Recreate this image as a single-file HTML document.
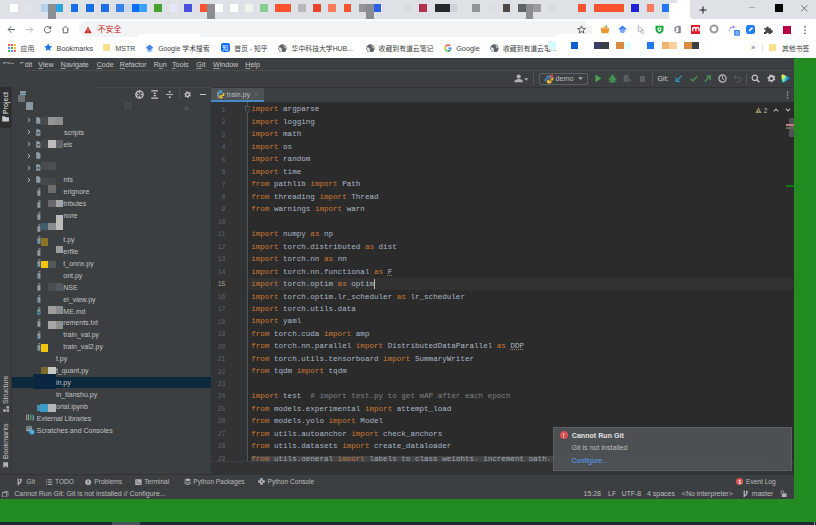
<!DOCTYPE html>
<html lang="zh"><head><meta charset="utf-8"><title>train.py</title>
<style>
html,body{margin:0;padding:0}
body{width:816px;height:525px;overflow:hidden;position:relative;background:#228b22;font-family:"Liberation Sans","Noto Sans CJK SC",sans-serif;-webkit-font-smoothing:antialiased}
.a,.q,.t,svg{position:absolute}
.t{white-space:nowrap;line-height:10px;height:10px}
.bm{font-size:7.3px;color:#3c4043;top:43.8px}
.cj{font-size:6.85px}
.mn{font-size:7.1px;color:#c6c6c6;top:60px}
.mn u{text-decoration:underline;text-decoration-color:rgba(198,198,198,0.65);text-decoration-thickness:0.5px;text-underline-offset:0.8px}
.tr{font-size:7px;color:#c2c2c2}
.tw{font-size:6.6px;color:#bbbbbb;top:476.7px}
.sb{font-size:7px;color:#bbbbbb;top:488.7px}
.code{font-family:"Liberation Mono",monospace;font-size:7.58px;color:#a9b7c6;left:251.2px;white-space:pre;line-height:12.47px;top:103.1px}
.code b{font-weight:normal;color:#cc7832}
.code i{font-style:normal;color:#808080}
.code u{text-decoration:underline dotted #8a8a5a;text-decoration-thickness:0.7px;text-underline-offset:1.2px}
.ln{font-family:"Liberation Mono",monospace;font-size:7.5px;color:#606366;transform:scaleX(0.86);transform-origin:100% 0;white-space:pre;line-height:12.47px;top:103.1px;left:205px;width:20.5px;text-align:right}
.vt{transform-origin:0 0;transform:rotate(-90deg);font-size:7.1px;color:#c4c4c4}
</style></head><body>

<div class="a" style="left:0;top:0;width:816px;height:19px;background:#dee1e6"></div>
<div class="a" style="left:669px;top:3px;width:21px;height:16px;background:#fff;border-radius:3px 3px 0 0"></div>
<div class="a" style="left:676.5px;top:0;width:13.5px;height:6px;background:#fff"></div>
<div class="a" style="left:690px;top:0;width:6px;height:19px;background:#fff"></div>
<div class="a" style="left:690px;top:0;width:126px;height:19px;background:#dee1e6;border-radius:0 0 0 3.5px"></div>
<div class="q" style="left:10.0px;top:4.0px;width:8.0px;height:7.5px;background:#ffffff"></div>
<div class="q" style="left:25.0px;top:4.0px;width:7.5px;height:7.5px;background:#e0e4ec"></div>
<div class="q" style="left:41.0px;top:4.0px;width:7.3px;height:7.5px;background:#b3d3ec"></div>
<div class="q" style="left:48.3px;top:4.0px;width:7.5px;height:14.7px;background:#8a8d91"></div>
<div class="q" style="left:55.8px;top:4.0px;width:7.5px;height:7.5px;background:#2ea5dd"></div>
<div class="q" style="left:70.8px;top:4.0px;width:7.5px;height:7.5px;background:#1a6fe8"></div>
<div class="q" style="left:85.8px;top:4.0px;width:7.8px;height:7.5px;background:#1a6fe8"></div>
<div class="q" style="left:100.8px;top:4.0px;width:7.8px;height:7.5px;background:#1a6fe8"></div>
<div class="q" style="left:116.0px;top:4.0px;width:7.6px;height:7.5px;background:#3b82e6"></div>
<div class="q" style="left:123.6px;top:4.0px;width:8.0px;height:7.5px;background:#c8d7ec"></div>
<div class="q" style="left:131.6px;top:4.0px;width:7.7px;height:7.5px;background:#0b6cf5"></div>
<div class="q" style="left:139.3px;top:4.0px;width:7.5px;height:7.5px;background:#3ba0f8"></div>
<div class="q" style="left:154.0px;top:4.0px;width:7.8px;height:7.5px;background:#45a02d"></div>
<div class="q" style="left:169.3px;top:4.0px;width:7.5px;height:7.5px;background:#e6e8fb"></div>
<div class="q" style="left:184.3px;top:4.0px;width:7.9px;height:7.5px;background:#4a4fdc"></div>
<div class="q" style="left:199.8px;top:4.0px;width:7.5px;height:7.5px;background:#fc5230"></div>
<div class="q" style="left:207.3px;top:4.0px;width:7.5px;height:14.7px;background:#8a8d91"></div>
<div class="q" style="left:214.8px;top:4.0px;width:7.9px;height:7.5px;background:#ffffff"></div>
<div class="q" style="left:230.2px;top:4.0px;width:7.5px;height:7.5px;background:#ffffff"></div>
<div class="q" style="left:245.2px;top:4.0px;width:7.5px;height:7.5px;background:#eaf5ec"></div>
<div class="q" style="left:260.2px;top:4.0px;width:7.8px;height:7.5px;background:#84cd8d"></div>
<div class="q" style="left:275.3px;top:4.0px;width:15.4px;height:7.5px;background:#fc5230"></div>
<div class="q" style="left:298.2px;top:4.0px;width:7.6px;height:7.5px;background:#b9babc"></div>
<div class="q" style="left:313.2px;top:4.0px;width:7.6px;height:7.5px;background:#e5452b"></div>
<div class="q" style="left:328.3px;top:4.0px;width:7.5px;height:7.5px;background:#fb7a5c"></div>
<div class="q" style="left:343.7px;top:4.0px;width:7.5px;height:7.5px;background:#fb5230"></div>
<div class="q" style="left:359.0px;top:4.0px;width:7.2px;height:7.5px;background:#929497"></div>
<div class="q" style="left:366.2px;top:4.0px;width:7.5px;height:14.7px;background:#8a8d91"></div>
<div class="q" style="left:373.7px;top:4.0px;width:7.8px;height:7.5px;background:#2b62e3"></div>
<div class="q" style="left:403.6px;top:4.0px;width:7.4px;height:7.5px;background:#d9dce2"></div>
<div class="q" style="left:419.2px;top:4.0px;width:7.6px;height:7.5px;background:#b5304e"></div>
<div class="q" style="left:434.7px;top:4.0px;width:15.0px;height:7.5px;background:#24292e"></div>
<div class="q" style="left:449.7px;top:4.0px;width:7.5px;height:7.5px;background:#cdd2dc"></div>
<div class="q" style="left:472.2px;top:4.0px;width:7.8px;height:7.5px;background:#929497"></div>
<div class="q" style="left:487.7px;top:4.0px;width:7.0px;height:7.5px;background:#dadde2"></div>
<div class="q" style="left:502.7px;top:4.0px;width:7.3px;height:7.5px;background:#4c4947"></div>
<div class="q" style="left:518.0px;top:4.0px;width:7.5px;height:7.5px;background:#5f6368"></div>
<div class="q" style="left:525.5px;top:4.0px;width:7.5px;height:14.7px;background:#8a8d91"></div>
<div class="q" style="left:533.0px;top:4.0px;width:7.5px;height:7.5px;background:#9a9c9f"></div>
<div class="q" style="left:547.0px;top:4.0px;width:8.0px;height:7.5px;background:#d9dce1"></div>
<div class="q" style="left:578.2px;top:4.0px;width:7.8px;height:7.5px;background:#fc5230"></div>
<div class="q" style="left:593.5px;top:4.0px;width:30.5px;height:7.5px;background:#fc5230"></div>
<div class="q" style="left:631.2px;top:4.0px;width:7.8px;height:7.5px;background:#1f22d0"></div>
<div class="q" style="left:646.5px;top:4.0px;width:7.5px;height:7.5px;background:#fb7a5c"></div>
<div class="q" style="left:661.8px;top:4.0px;width:7.2px;height:7.5px;background:#2176f2"></div>
<div class="q" style="left:775.0px;top:4.0px;width:8.0px;height:7.7px;background:#000000"></div>
<svg style="left:698px;top:4.5px" width="10" height="10" viewBox="0 0 10 10"><path d="M5 1.5V8.5M1.5 5H8.5" stroke="#202124" stroke-width="1.1" fill="none"/></svg>
<div class="a" style="left:749px;top:7.2px;width:6px;height:1px;background:#a8abaf"></div>
<svg style="left:799.5px;top:3.5px" width="9" height="9" viewBox="0 0 9 9"><path d="M1.3 1.3L7.3 7.3M7.3 1.3L1.3 7.3" stroke="#5f6368" stroke-width="0.9" fill="none"/></svg>
<div class="a" style="left:0;top:19px;width:816px;height:39px;background:#fff"></div>
<div class="a" style="left:78.8px;top:21.3px;width:513px;height:15.9px;background:#f1f3f4;border-radius:8px"></div>
<div class="q" style="left:139.0px;top:34.2px;width:60.7px;height:3.2px;background:#fff"></div>
<div class="q" style="left:555.8px;top:34.2px;width:40.0px;height:3.2px;background:#fff"></div>
<div class="q" style="left:586.0px;top:21.0px;width:8.0px;height:16.5px;background:#fff"></div>
<div class="q" style="left:586.0px;top:26.3px;width:5.7px;height:7.5px;background:#f1f3f4"></div>
<svg style="left:6.8px;top:24.8px" width="9" height="9" viewBox="0 0 9 9"><path d="M8 4.5H1.3M4.3 1.3L1.2 4.5L4.3 7.7" stroke="#5f6368" stroke-width="1" fill="none"/></svg>
<svg style="left:25.2px;top:24.8px" width="9" height="9" viewBox="0 0 9 9"><path d="M1 4.5H7.7M4.7 1.3L7.8 4.5L4.7 7.7" stroke="#bdc1c6" stroke-width="1" fill="none"/></svg>
<svg style="left:43.3px;top:24.8px" width="9" height="9" viewBox="0 0 9 9"><path d="M7.4 3.2A3.2 3.2 0 1 0 7.7 5.3" stroke="#5f6368" stroke-width="1" fill="none"/><path d="M8.2 0.8V3.8H5.2Z" fill="#5f6368"/></svg>
<svg style="left:61.3px;top:24.8px" width="9" height="9" viewBox="0 0 9 9"><path d="M1.2 4.3L4.5 1.3L7.8 4.3M2.2 3.8V7.8H6.8V3.8" stroke="#5f6368" stroke-width="1" fill="none"/></svg>
<svg style="left:84.3px;top:26px" width="8" height="8" viewBox="0 0 8 8"><path d="M4 0.6L7.6 7.2H0.4Z" fill="#c5221f"/><path d="M4 3V5.1M4 5.7V6.5" stroke="#fff" stroke-width="0.8"/></svg>
<div class="t" style="left:97.8px;top:24.6px;font-size:7.8px;color:#c5221f">不安全</div>
<svg style="left:577.3px;top:25.3px" width="9" height="9" viewBox="0 0 9 9"><path d="M4.5 0.9L5.6 3.4L8.3 3.6L6.2 5.4L6.9 8L4.5 6.6L2.1 8L2.8 5.4L0.7 3.6L3.4 3.4Z" stroke="#3c4043" stroke-width="0.8" fill="none"/></svg>
<svg style="left:600px;top:25px" width="10" height="9" viewBox="0 0 10 9"><path d="M0.5 3.2H9.5L8.3 8.2H1.7Z" fill="#e8962e"/><path d="M2 3L5 1.2L8 3Z" fill="#f0b04a"/><path d="M5.2 0.3L7.6 1.3L6 2.6Z" fill="#3aa335"/></svg>
<svg style="left:618.3px;top:25px" width="9" height="9" viewBox="0 0 9 9"><path d="M4.5 0.8L8.8 4.2H0.2Z" fill="#4285f4"/><circle cx="4.5" cy="5.6" r="2.6" fill="#7baaf7"/><path d="M4.5 0.8L8.8 4.2H0.2Z" fill="#4285f4"/></svg>
<svg style="left:637px;top:25px" width="9" height="10" viewBox="0 0 9 10"><path d="M1.2 0.8L1.2 7L3 5.4L4.3 8.2L5.3 7.7L4 5L6.3 4.9Z" stroke="#9aa0a6" stroke-width="0.7" fill="#fff"/><circle cx="6" cy="7" r="1.6" stroke="#bdc1c6" stroke-width="0.6" fill="none"/></svg>
<svg style="left:654.5px;top:25px" width="9" height="9" viewBox="0 0 9 9"><path d="M0.5 0.8H8.5V4.5C8.5 6.8 6.5 8.2 4.5 8.8C2.5 8.2 0.5 6.8 0.5 4.5Z" fill="#1aa63a"/><path d="M2.6 2.6H6.4V4.4C6.4 5.6 5.5 6.3 4.5 6.7C3.5 6.3 2.6 5.6 2.6 4.4Z" fill="#fff"/><path d="M3.6 3.4H5.4V4.6L4.5 5.3L3.6 4.6Z" fill="#1aa63a"/></svg>
<svg style="left:672.5px;top:25px" width="9" height="9" viewBox="0 0 9 9"><path d="M1.5 2.3L5.6 0.6L7.8 1.3V7.8L5.6 8.5L1.5 6.9L5.4 7.3V1.9L3.2 2.5V6.1L1.5 6.9Z" fill="#80868b"/></svg>
<div class="q" style="left:690.7px;top:25.1px;width:9.7px;height:8.6px;background:#e0192b"></div>
<svg style="left:690.7px;top:25.1px" width="9.7" height="8.6" viewBox="0 0 9.7 8.6"><path d="M1.7 6.3V3.7Q1.7 2.5 3.25 2.5Q4.85 2.5 4.85 3.9V6.3M4.85 3.9Q4.85 2.5 6.45 2.5Q8 2.5 8 3.7V6.3" stroke="#fff" stroke-width="1.3" fill="none"/></svg>
<svg style="left:708.5px;top:24.2px" width="10" height="10" viewBox="0 0 10 10"><circle cx="5" cy="5" r="3.5" stroke="#9e9e9e" stroke-width="2.1" fill="none"/></svg>
<svg style="left:727.5px;top:24.5px" width="13" height="12" viewBox="0 0 13 12"><path d="M2 4.2A2.2 2.2 0 0 1 4.2 2H6.5M5.3 0.8L6.7 2L5.3 3.2" stroke="#7a5bd6" stroke-width="0.9" fill="none"/><path d="M1.3 5.2V6.2" stroke="#4a8cf0" stroke-width="0.9"/><rect x="6.2" y="5" width="5.6" height="5.8" rx="0.8" fill="#2b7ff2"/><path d="M8.2 6.5H9.2A1.2 1.4 0 0 1 9.2 9.3H8.2Z" stroke="#fff" stroke-width="0.6" fill="none"/></svg>
<div class="a" style="left:745.6px;top:25px;width:9.2px;height:9px;background:#1f80f5;border-radius:2.3px"></div>
<svg style="left:745.6px;top:25px" width="9.2" height="9" viewBox="0 0 9.2 9"><path d="M2.6 6.6L3 4.9L5.9 2L7.1 3.2L4.2 6.1Z" fill="#fff"/></svg>
<svg style="left:763.2px;top:24.8px" width="10" height="10" viewBox="0 0 10 10"><path d="M1 3.2H3.3A1.3 1.3 0 1 1 5.7 3.2H8V5.3A1.3 1.3 0 1 1 8 7.7V9H5.8A1.2 1.2 0 1 0 3.4 9H1V6.9A1.25 1.25 0 1 0 1 4.5Z" fill="#454749"/></svg>
<div class="q" style="left:782.6px;top:26.1px;width:8.2px;height:7.8px;background:#b80045"></div>
<svg style="left:802.5px;top:24.5px" width="4" height="10" viewBox="0 0 4 10"><circle cx="2" cy="1.7" r="0.85" fill="#5f6368"/><circle cx="2" cy="5" r="0.85" fill="#5f6368"/><circle cx="2" cy="8.3" r="0.85" fill="#5f6368"/></svg>
<svg style="left:7.5px;top:43.6px" width="8" height="8" viewBox="0 0 8 8"><rect x="0.1" y="0.1" width="1.9" height="1.9" fill="#ea4335"/><rect x="3.0" y="0.1" width="1.9" height="1.9" fill="#ea4335"/><rect x="5.9" y="0.1" width="1.9" height="1.9" fill="#fbbc04"/><rect x="0.1" y="3.0" width="1.9" height="1.9" fill="#4285f4"/><rect x="3.0" y="3.0" width="1.9" height="1.9" fill="#34a853"/><rect x="5.9" y="3.0" width="1.9" height="1.9" fill="#fbbc04"/><rect x="0.1" y="5.9" width="1.9" height="1.9" fill="#34a853"/><rect x="3.0" y="5.9" width="1.9" height="1.9" fill="#4285f4"/><rect x="5.9" y="5.9" width="1.9" height="1.9" fill="#ea4335"/></svg>
<div class="t bm cj" style="left:20.6px">应用</div>
<svg style="left:43.8px;top:43.3px" width="8.4" height="8.4" viewBox="0 0 9 9"><path d="M4.5 0.4L5.8 3.2L8.8 3.5L6.5 5.5L7.2 8.5L4.5 6.9L1.8 8.5L2.5 5.5L0.2 3.5L3.2 3.2Z" fill="#1a73e8"/></svg>
<div class="t bm" style="left:56.6px">Bookmarks</div>
<div class="a" style="left:103.3px;top:43.8px;width:6.8px;height:7.6px;background:#fbe08c;border-radius:1px"></div>
<div class="t bm" style="left:115.6px;font-size:6.9px;top:44px">MSTR</div>
<svg style="left:144.6px;top:43.6px" width="9.2" height="8.8" viewBox="0 0 9 9"><circle cx="4.5" cy="5.8" r="2.7" fill="#a0c3ff"/><path d="M4.5 0.6L8.9 4.3H0.1Z" fill="#4285f4"/><path d="M2.2 4.3H6.8L4.5 6.6Z" fill="#356ac3"/></svg>
<div class="t bm cj" style="left:158.2px">Google 学术搜索</div>
<div class="a" style="left:220.7px;top:43px;width:9.4px;height:9.2px;background:#0a6cff;border-radius:2.2px"></div>
<div class="t" style="left:222.3px;top:42.7px;font-size:6.2px;color:#fff">知</div>
<div class="t bm cj" style="left:234.2px">首页 - 知乎</div>
<svg style="left:278.2px;top:43.6px" width="8.9" height="8.9" viewBox="0 0 9 9"><circle cx="4.5" cy="4.5" r="4.2" fill="#5f6368"/><path d="M1.2 3.2C2.4 3 3 3.8 3.8 4.6C4.2 5.3 3.4 6 3.9 7.2L4.2 8.3C2.4 8 1 6.6 0.9 4.6Z M5.2 1C5.4 2 6.4 2.2 6.6 3.2C6.2 4 7 4.6 7.9 4.4C7.9 3 7 1.4 5.2 1Z" fill="#fff" opacity="0.85"/></svg>
<div class="t bm cj" style="left:291.6px">华中科技大学HUB...</div>
<svg style="left:365.9px;top:43.6px" width="8.9" height="8.9" viewBox="0 0 9 9"><circle cx="4.5" cy="4.5" r="4.2" fill="#5f6368"/><path d="M1.2 3.2C2.4 3 3 3.8 3.8 4.6C4.2 5.3 3.4 6 3.9 7.2L4.2 8.3C2.4 8 1 6.6 0.9 4.6Z M5.2 1C5.4 2 6.4 2.2 6.6 3.2C6.2 4 7 4.6 7.9 4.4C7.9 3 7 1.4 5.2 1Z" fill="#fff" opacity="0.85"/></svg>
<div class="t bm cj" style="left:378.6px">收藏到有道云笔记</div>
<svg style="left:443.5px;top:43.6px" width="8" height="8" viewBox="0 0 8 8"><path d="M7.6 3.4H4.1V4.8H6.1A2.3 2.3 0 0 1 4.1 6.4V7.8A3.8 3.8 0 0 0 7.6 3.4Z" fill="#4285f4"/><path d="M4.1 0.2A3.8 3.8 0 0 0 0.8 2.2L2 3.1A2.4 2.4 0 0 1 4.1 1.6C4.8 1.6 5.3 1.9 5.7 2.2L6.7 1.2A3.8 3.8 0 0 0 4.1 0.2Z" fill="#ea4335"/><path d="M0.8 2.2A3.8 3.8 0 0 0 0.8 5.8L2 4.9A2.4 2.4 0 0 1 2 3.1Z" fill="#fbbc04"/><path d="M0.8 5.8A3.8 3.8 0 0 0 4.1 7.8A3.7 3.7 0 0 0 6.6 6.9L5.4 6A2.4 2.4 0 0 1 2 4.9Z" fill="#34a853"/></svg>
<div class="t bm" style="left:456.2px">Google</div>
<svg style="left:489.8px;top:43.6px" width="8.9" height="8.9" viewBox="0 0 9 9"><circle cx="4.5" cy="4.5" r="4.2" fill="#5f6368"/><path d="M1.2 3.2C2.4 3 3 3.8 3.8 4.6C4.2 5.3 3.4 6 3.9 7.2L4.2 8.3C2.4 8 1 6.6 0.9 4.6Z M5.2 1C5.4 2 6.4 2.2 6.6 3.2C6.2 4 7 4.6 7.9 4.4C7.9 3 7 1.4 5.2 1Z" fill="#fff" opacity="0.85"/></svg>
<div class="t bm cj" style="left:502.9px">收藏到有道云笔...</div>
<div class="q" style="left:548.3px;top:41.3px;width:7.5px;height:8.2px;background:#d5fbff"></div>
<div class="q" style="left:570.8px;top:41.5px;width:7.5px;height:7.5px;background:#0f5fd0"></div>
<div class="q" style="left:593.7px;top:41.5px;width:7.5px;height:7.5px;background:#3b3d6b"></div>
<div class="q" style="left:601.2px;top:41.5px;width:7.6px;height:7.5px;background:#3a3f44"></div>
<div class="q" style="left:616.2px;top:41.5px;width:7.6px;height:7.5px;background:#d98c3f"></div>
<div class="q" style="left:623.8px;top:41.5px;width:7.5px;height:7.5px;background:#e3fdfd"></div>
<div class="q" style="left:646.7px;top:41.5px;width:7.4px;height:7.5px;background:#1f78f0"></div>
<div class="q" style="left:661.8px;top:41.5px;width:7.5px;height:7.5px;background:#f0b473"></div>
<div class="q" style="left:669.3px;top:41.5px;width:7.6px;height:7.5px;background:#fbd09c"></div>
<div class="q" style="left:684.2px;top:41.5px;width:7.6px;height:7.5px;background:#d98c3f"></div>
<div class="q" style="left:691.8px;top:41.5px;width:7.6px;height:7.5px;background:#3a3f44"></div>
<div class="t" style="left:751px;top:42.6px;font-size:7.5px;color:#5f6368">»</div>
<div class="a" style="left:762.3px;top:42.5px;width:0.6px;height:10px;background:#e4e6e8"></div>
<div class="a" style="left:769px;top:43.8px;width:7px;height:7.6px;background:#fbe08c;border-radius:1px"></div>
<div class="t bm cj" style="left:782px">其他书签</div>
<div class="a" style="left:0;top:58px;width:794px;height:441px;background:#3c3f41"></div>
<div class="t mn" style="left:3px"><u>F</u>ile</div>
<div class="t mn" style="left:20px"><u>E</u>dit</div>
<div class="t mn" style="left:38.3px"><u>V</u>iew</div>
<div class="t mn" style="left:60.8px"><u>N</u>avigate</div>
<div class="t mn" style="left:96.7px"><u>C</u>ode</div>
<div class="t mn" style="left:119.8px"><u>R</u>efactor</div>
<div class="t mn" style="left:153.7px">R<u>u</u>n</div>
<div class="t mn" style="left:172px"><u>T</u>ools</div>
<div class="t mn" style="left:196.3px"><u>G</u>it</div>
<div class="t mn" style="left:213px"><u>W</u>indow</div>
<div class="t mn" style="left:245.3px"><u>H</u>elp</div>
<div class="q" style="left:0.0px;top:63.7px;width:25.2px;height:7.6px;background:#3c3f41"></div>
<div class="a" style="left:25px;top:70.2px;width:769px;height:0.7px;background:#4b4e50"></div>
<div class="a" style="left:210.6px;top:86.5px;width:583.4px;height:0.9px;background:#323232"></div><svg style="left:513.6px;top:74.2px" width="9.4" height="9" viewBox="0 0 9.4 9"><circle cx="4.7" cy="2.6" r="2.1" fill="#afb1b3"/><path d="M0.4 8.2C0.4 5.8 2.3 5 4.7 5C7.1 5 9 5.8 9 8.2Z" fill="#afb1b3"/></svg>
<svg style="left:523.8px;top:77.6px" width="4.4" height="3" viewBox="0 0 4.4 3"><path d="M0.2 0.3H4.2L2.2 2.7Z" fill="#afb1b3"/></svg>
<div class="a" style="left:533px;top:73px;width:0.7px;height:11.5px;background:#555759"></div>
<div class="a" style="left:538.6px;top:72.6px;width:47.4px;height:10.6px;border:0.8px solid #5e6162;border-radius:2px"></div>
<svg style="left:543.8px;top:73.6px" width="10" height="10" viewBox="0 0 10 10"><path d="M4.2 1.2C2.7 1.2 2.3 1.8 2.3 2.7V3.7H4.6V4.2H1.5C0.6 4.2 0.3 5 0.3 6C0.3 7 0.7 7.7 1.5 7.7H2.3V6.5C2.3 5.6 3 5 3.8 5H5.7C6.4 5 6.9 4.4 6.9 3.8V2.7C6.9 1.8 6.2 1.2 5.4 1.2Z" fill="#3d7dab"/><path d="M5.6 9.6C7.1 9.6 7.5 9 7.5 8.1V7.1H5.2V6.6H8.3C9.2 6.6 9.5 5.8 9.5 4.8C9.5 3.8 9.1 3.1 8.3 3.1H7.5V4.3C7.5 5.2 6.8 5.8 6 5.8H4.1C3.4 5.8 2.9 6.4 2.9 7V8.1C2.9 9 3.6 9.6 4.4 9.6Z" fill="#e8b830"/><path d="M6 0.6L9.2 3.8M9.2 0.6L6 3.8" stroke="#e0525a" stroke-width="1.1"/></svg>
<div class="t" style="left:555.4px;top:73.9px;font-size:7.3px;color:#bbbbbb">demo</div>
<svg style="left:577.6px;top:77.4px" width="5" height="3.4" viewBox="0 0 5 3.4"><path d="M0.2 0.3H4.8L2.5 3.1Z" fill="#afb1b3"/></svg>
<svg style="left:595.3px;top:74.4px" width="7" height="8.6" viewBox="0 0 7 8.6"><path d="M0.4 0.4L6.5 4.3L0.4 8.2Z" fill="#499c54"/></svg>
<svg style="left:608.2px;top:74px" width="9" height="9.4" viewBox="0 0 9 9.4"><ellipse cx="4.5" cy="5.6" rx="2.6" ry="3.3" fill="#499c54"/><path d="M2.9 2.6A1.6 1.6 0 0 1 6.1 2.6Z" fill="#499c54"/><path d="M0.6 3.4L2.2 4.4M8.4 3.4L6.8 4.4M0.3 5.8H2M8.7 5.8H7M0.7 8.4L2.2 7.3M8.3 8.4L6.8 7.3M2.8 0.6L3.6 1.6M6.2 0.6L5.4 1.6" stroke="#499c54" stroke-width="0.8"/><path d="M3.4 4.8H5.6M3.4 6.6H5.6" stroke="#3c3f41" stroke-width="0.6"/></svg>
<svg style="left:623px;top:74.2px" width="9.4" height="9.2" viewBox="0 0 9.4 9.2"><path d="M0.8 0.8H5.8V8H0.8Z" fill="#5d6062"/><path d="M4.6 3.6L9 6.2L4.6 8.8Z" fill="#5d6062" stroke="#3c3f41" stroke-width="0.5"/></svg>
<div class="q" style="left:639.7px;top:75.8px;width:5.8px;height:5.8px;background:#5d6062"></div>
<div class="a" style="left:651.8px;top:73px;width:0.7px;height:11.5px;background:#555759"></div>
<div class="t" style="left:657.6px;top:73.9px;font-size:7.1px;color:#cfcfcf">Git:</div>
<svg style="left:675.1px;top:75px" width="7.4" height="7.4" viewBox="0 0 8.4 8.4"><path d="M7.6 0.8L1.6 6.8M1.2 2.8V7.2H5.6" stroke="#3592c4" stroke-width="1.3" fill="none"/></svg>
<svg style="left:689.5px;top:75.2px" width="8" height="7.1" viewBox="0 0 9 8"><path d="M0.8 4.2L3.3 6.7L8.3 1.1" stroke="#499c54" stroke-width="1.3" fill="none"/></svg>
<svg style="left:704.1px;top:75px" width="7.4" height="7.4" viewBox="0 0 8.4 8.4"><path d="M0.8 7.6L6.8 1.6M2.8 1.2H7.2V5.6" stroke="#499c54" stroke-width="1.3" fill="none"/></svg>
<svg style="left:718px;top:74.2px" width="9" height="9" viewBox="0 0 9 9"><circle cx="4.5" cy="4.5" r="3.6" stroke="#bcbec0" stroke-width="1.2" fill="none"/><path d="M4.5 2.2V4.7L6.2 5.6" stroke="#bcbec0" stroke-width="1" fill="none"/></svg>
<svg style="left:733.2px;top:74.4px" width="9" height="9" viewBox="0 0 9 9"><path d="M1.2 3.2H5.6A2.4 2.4 0 0 1 5.6 8H3.4" stroke="#5d6062" stroke-width="1" fill="none"/><path d="M3 1.2L1 3.2L3 5.2" stroke="#5d6062" stroke-width="1" fill="none"/></svg>
<div class="a" style="left:746.4px;top:73px;width:0.7px;height:11.5px;background:#555759"></div>
<svg style="left:751.4px;top:74.2px" width="9" height="9" viewBox="0 0 9 9"><circle cx="3.8" cy="3.8" r="2.7" stroke="#c4c6c8" stroke-width="1.2" fill="none"/><path d="M5.8 5.8L8.3 8.3" stroke="#c4c6c8" stroke-width="1.4"/></svg>
<svg style="left:766.6px;top:74.2px" width="9" height="9" viewBox="0 0 9 9"><path d="M4.5 0.4L5.3 0.5L5.6 1.6L6.5 2.1L7.5 1.6L8.2 2.6L7.5 3.4V4.6L8.4 5.3L7.8 6.5L6.7 6.3L5.9 7L5.7 8.1L4.5 8.4L3.9 7.4L2.9 7.1L1.9 7.6L1 6.7L1.6 5.7L1.3 4.7L0.3 4.2L0.6 3L1.7 2.9L2.3 2L2.1 0.9L3.2 0.5L3.9 1.4Z" fill="#c4c6c8"/><circle cx="4.4" cy="4.4" r="1.5" fill="#3c3f41"/></svg>
<svg style="left:781.1px;top:74.3px" width="9" height="8.8" viewBox="0 0 9.4 9.2"><defs><linearGradient id="cw" x1="0" y1="0.2" x2="1" y2="0.55"><stop offset="0" stop-color="#f6f24a"/><stop offset="0.28" stop-color="#d4ec5c"/><stop offset="0.5" stop-color="#6fd6a6"/><stop offset="0.68" stop-color="#1f8fe0"/><stop offset="1" stop-color="#1d6fd8"/></linearGradient><linearGradient id="cw2" x1="0.1" y1="1" x2="0.35" y2="0.45"><stop offset="0" stop-color="#22c8dc"/><stop offset="1" stop-color="#22c8dc" stop-opacity="0"/></linearGradient></defs><path d="M2.4 0.6C1.2 0.2 0.4 0.9 0.5 2.1L1 7.2C1.1 8.5 2.1 9 3.1 8.4L8.3 5.6C9.2 5 9.2 4 8.3 3.5Z" fill="url(#cw)"/><path d="M2.4 0.6C1.2 0.2 0.4 0.9 0.5 2.1L1 7.2C1.1 8.5 2.1 9 3.1 8.4L8.3 5.6C9.2 5 9.2 4 8.3 3.5Z" fill="url(#cw2)"/></svg>
<div class="a" style="left:0;top:87.3px;width:11.8px;height:40.7px;background:#2d2f30"></div>
<div class="a" style="left:11.3px;top:87.3px;width:0.7px;height:387px;background:#323436"></div>
<div class="t vt" style="left:0.6px;top:113.6px;color:#e8e8e8">Project</div>
<svg style="left:2.2px;top:116.4px" width="7.2" height="5.8" viewBox="0 0 7.2 5.8"><path d="M0.2 0.2H2.8L3.6 1.2H7V5.6H0.2Z" fill="#c9cbcd"/></svg>
<div class="t vt" style="left:0.6px;top:403.6px">Structure</div>
<svg style="left:2.6px;top:405.8px" width="6.4" height="6" viewBox="0 0 6.4 6"><rect x="3.4" y="0.2" width="2.6" height="2.4" fill="#afb1b3"/><rect x="0.2" y="3.4" width="2.6" height="2.4" fill="#afb1b3"/><rect x="3.6" y="3.4" width="2.6" height="2.4" fill="#afb1b3"/></svg>
<div class="t vt" style="left:0.6px;top:458.8px">Bookmarks</div>
<svg style="left:2.9px;top:461.8px" width="5.4" height="6" viewBox="0 0 5.4 6"><path d="M0.2 0.2H5.2V5.8L2.7 4.2L0.2 5.8Z" fill="#afb1b3"/></svg>
<div class="a" style="left:94px;top:86.6px;width:117px;height:0.7px;background:#45484a"></div>
<div class="q" style="left:19.5px;top:91.1px;width:6.0px;height:3.8px;background:#8d979d"></div>
<div class="q" style="left:19.5px;top:93.1px;width:6.0px;height:1.3px;background:#3d8fb5"></div>
<div class="q" style="left:18.0px;top:94.8px;width:7.3px;height:7.3px;background:#6b7275"></div>
<div class="q" style="left:25.7px;top:102.3px;width:7.5px;height:7.4px;background:#8796a1"></div>
<div class="q" style="left:124.2px;top:102.2px;width:7.4px;height:7.6px;background:#444749"></div>
<div class="t" style="left:184.6px;top:102.6px;font-size:5.6px;color:#6a6d6f">lo</div>
<svg style="left:135.4px;top:89.9px" width="9" height="9" viewBox="0 0 9 9"><circle cx="4.5" cy="4.5" r="3.65" stroke="#c4c6c8" stroke-width="1.3" fill="none"/><path d="M4.5 4L3.3 1.6H5.7ZM4.5 5L3.3 7.4H5.7ZM4 4.5L1.6 3.3V5.7ZM5 4.5L7.4 3.3V5.7Z" fill="#c4c6c8"/></svg>
<svg style="left:150.6px;top:90px" width="7.6" height="9" viewBox="0 0 7.6 9"><path d="M0.2 0.8H7.4M0.2 8.2H7.4" stroke="#c4c6c8" stroke-width="1.3"/><path d="M3.8 2.2L5.4 4H2.2ZM3.8 6.8L5.4 5H2.2Z" fill="#c4c6c8"/></svg>
<svg style="left:165.8px;top:90px" width="7.6" height="9" viewBox="0 0 7.6 9"><path d="M0.2 4.5H7.4" stroke="#c4c6c8" stroke-width="0.9"/><path d="M3.8 3.2L5.3 1.2H2.3ZM3.8 5.8L5.3 7.8H2.3Z" fill="#c4c6c8"/></svg>
<div class="a" style="left:178.7px;top:89px;width:0.7px;height:11px;background:#4b4e50"></div>
<svg style="left:184.4px;top:91.1px" width="7.4" height="7.4" viewBox="0 0 9 9"><path d="M4.5 0.4L5.3 0.5L5.6 1.6L6.5 2.1L7.5 1.6L8.2 2.6L7.5 3.4V4.6L8.4 5.3L7.8 6.5L6.7 6.3L5.9 7L5.7 8.1L4.5 8.4L3.9 7.4L2.9 7.1L1.9 7.6L1 6.7L1.6 5.7L1.3 4.7L0.3 4.2L0.6 3L1.7 2.9L2.3 2L2.1 0.9L3.2 0.5L3.9 1.4Z" fill="#c4c6c8"/><circle cx="4.4" cy="4.4" r="1.5" fill="#3c3f41"/></svg>
<div class="a" style="left:199.8px;top:94px;width:6.6px;height:1px;background:#c4c6c8"></div>
<svg style="left:26.9px;top:117.4px" width="4" height="6" viewBox="0 0 4 6"><path d="M0.7 0.9L3 3L0.7 5.1" stroke="#afb1b3" stroke-width="1" fill="none"/></svg>
<svg style="left:36.2px;top:116.7px" width="4.6" height="7" viewBox="0 0 4.6 7"><path d="M0.2 0.3H2.6L4.4 1.4V6.8H0.2Z" fill="#8a9ba8"/></svg>
<svg style="left:26.9px;top:129.3px" width="4" height="6" viewBox="0 0 4 6"><path d="M0.7 0.9L3 3L0.7 5.1" stroke="#afb1b3" stroke-width="1" fill="none"/></svg>
<svg style="left:36.2px;top:128.6px" width="4.6" height="7" viewBox="0 0 4.6 7"><path d="M0.2 0.3H2.6L4.4 1.4V6.8H0.2Z" fill="#8a9ba8"/><rect x="1.6" y="3" width="1.8" height="1.8" fill="#3c3f41"/></svg>
<svg style="left:26.9px;top:141.2px" width="4" height="6" viewBox="0 0 4 6"><path d="M0.7 0.9L3 3L0.7 5.1" stroke="#afb1b3" stroke-width="1" fill="none"/></svg>
<svg style="left:36.2px;top:140.5px" width="4.6" height="7" viewBox="0 0 4.6 7"><path d="M0.2 0.3H2.6L4.4 1.4V6.8H0.2Z" fill="#8a9ba8"/><rect x="1.6" y="3" width="1.8" height="1.8" fill="#3c3f41"/></svg>
<svg style="left:26.9px;top:153.1px" width="4" height="6" viewBox="0 0 4 6"><path d="M0.7 0.9L3 3L0.7 5.1" stroke="#afb1b3" stroke-width="1" fill="none"/></svg>
<svg style="left:36.2px;top:152.4px" width="4.6" height="7" viewBox="0 0 4.6 7"><path d="M0.2 0.3H2.6L4.4 1.4V6.8H0.2Z" fill="#8a9ba8"/></svg>
<svg style="left:26.9px;top:165.0px" width="4" height="6" viewBox="0 0 4 6"><path d="M0.7 0.9L3 3L0.7 5.1" stroke="#afb1b3" stroke-width="1" fill="none"/></svg>
<svg style="left:36.2px;top:164.3px" width="4.6" height="7" viewBox="0 0 4.6 7"><path d="M0.2 0.3H2.6L4.4 1.4V6.8H0.2Z" fill="#8a9ba8"/><rect x="1.6" y="3" width="1.8" height="1.8" fill="#3c3f41"/></svg>
<svg style="left:26.9px;top:176.9px" width="4" height="6" viewBox="0 0 4 6"><path d="M0.7 0.9L3 3L0.7 5.1" stroke="#afb1b3" stroke-width="1" fill="none"/></svg>
<svg style="left:36.2px;top:176.2px" width="4.6" height="7" viewBox="0 0 4.6 7"><path d="M0.2 0.3H2.6L4.4 1.4V6.8H0.2Z" fill="#8a9ba8"/></svg>
<svg style="left:37.2px;top:188.0px" width="3.6" height="8" viewBox="0 0 3.6 8"><path d="M1.4 0.2H3.4V1.4H1.4Z M0.4 2.2H3.4V7.8H0.4Z" fill="#919da5"/></svg>
<svg style="left:37.2px;top:199.9px" width="3.6" height="8" viewBox="0 0 3.6 8"><path d="M1.4 0.2H3.4V1.4H1.4Z M0.4 2.2H3.4V7.8H0.4Z" fill="#919da5"/></svg>
<svg style="left:37.2px;top:211.8px" width="3.6" height="8" viewBox="0 0 3.6 8"><path d="M1.4 0.2H3.4V1.4H1.4Z M0.4 2.2H3.4V7.8H0.4Z" fill="#919da5"/></svg>
<svg style="left:37.2px;top:223.7px" width="3.6" height="8" viewBox="0 0 3.6 8"><path d="M1.4 0.2H3.4V1.4H1.4Z M0.4 2.2H3.4V7.8H0.4Z" fill="#919da5"/></svg>
<svg style="left:37.2px;top:235.6px" width="3.6" height="8" viewBox="0 0 3.6 8"><path d="M1.4 0.2H3.4V1.4H1.4Z M0.4 2.2H3.4V7.8H0.4Z" fill="#919da5"/><rect x="0.3" y="4.8" width="1.5" height="2.4" fill="#3a86b0"/></svg>
<svg style="left:37.2px;top:247.5px" width="3.6" height="8" viewBox="0 0 3.6 8"><path d="M1.4 0.2H3.4V1.4H1.4Z M0.4 2.2H3.4V7.8H0.4Z" fill="#919da5"/></svg>
<svg style="left:37.2px;top:259.4px" width="3.6" height="8" viewBox="0 0 3.6 8"><path d="M1.4 0.2H3.4V1.4H1.4Z M0.4 2.2H3.4V7.8H0.4Z" fill="#919da5"/><rect x="0.3" y="4.8" width="1.5" height="2.4" fill="#3a86b0"/></svg>
<svg style="left:37.2px;top:271.3px" width="3.6" height="8" viewBox="0 0 3.6 8"><path d="M1.4 0.2H3.4V1.4H1.4Z M0.4 2.2H3.4V7.8H0.4Z" fill="#919da5"/><rect x="0.3" y="4.8" width="1.5" height="2.4" fill="#3a86b0"/></svg>
<svg style="left:37.2px;top:283.2px" width="3.6" height="8" viewBox="0 0 3.6 8"><path d="M1.4 0.2H3.4V1.4H1.4Z M0.4 2.2H3.4V7.8H0.4Z" fill="#919da5"/></svg>
<svg style="left:37.2px;top:295.1px" width="3.6" height="8" viewBox="0 0 3.6 8"><path d="M1.4 0.2H3.4V1.4H1.4Z M0.4 2.2H3.4V7.8H0.4Z" fill="#919da5"/><rect x="0.3" y="4.8" width="1.5" height="2.4" fill="#3a86b0"/></svg>
<svg style="left:37.2px;top:307.1px" width="3.6" height="8" viewBox="0 0 3.6 8"><path d="M1.4 0.2H3.4V1.4H1.4Z M0.4 2.2H3.4V7.8H0.4Z" fill="#919da5"/><rect x="0" y="4.2" width="3.2" height="3.4" fill="#3a8fbd"/><rect x="0.9" y="5.1" width="1.6" height="1.6" fill="#4a4d4f"/></svg>
<svg style="left:37.2px;top:319.0px" width="3.6" height="8" viewBox="0 0 3.6 8"><path d="M1.4 0.2H3.4V1.4H1.4Z M0.4 2.2H3.4V7.8H0.4Z" fill="#919da5"/></svg>
<svg style="left:37.2px;top:330.9px" width="3.6" height="8" viewBox="0 0 3.6 8"><path d="M1.4 0.2H3.4V1.4H1.4Z M0.4 2.2H3.4V7.8H0.4Z" fill="#919da5"/><rect x="0.3" y="4.8" width="1.5" height="2.4" fill="#3a86b0"/></svg>
<svg style="left:37.2px;top:342.8px" width="3.6" height="8" viewBox="0 0 3.6 8"><path d="M1.4 0.2H3.4V1.4H1.4Z M0.4 2.2H3.4V7.8H0.4Z" fill="#919da5"/><rect x="0.3" y="4.8" width="1.5" height="2.4" fill="#3a86b0"/></svg>
<div class="t tr" style="left:63.9px;top:127.8px">scripts</div>
<div class="t tr" style="left:63.4px;top:139.7px">els</div>
<div class="t tr" style="left:63.6px;top:175.4px">nts</div>
<div class="t tr" style="left:63.6px;top:187.4px">erignore</div>
<div class="t tr" style="left:63.3px;top:199.3px">tributes</div>
<div class="t tr" style="left:63.4px;top:211.2px">nore</div>
<div class="t tr" style="left:63.3px;top:235.0px">t.py</div>
<div class="t tr" style="left:63.3px;top:246.9px">erfile</div>
<div class="t tr" style="left:63.3px;top:258.8px">t_onnx.py</div>
<div class="t tr" style="left:63.3px;top:270.7px">ont.py</div>
<div class="t tr" style="left:63.3px;top:282.6px">NSE</div>
<div class="t tr" style="left:63.3px;top:294.6px">el_view.py</div>
<div class="t tr" style="left:63.3px;top:306.5px">ME.md</div>
<div class="t tr" style="left:63.3px;top:318.4px">rements.txt</div>
<div class="t tr" style="left:63.3px;top:330.3px">train_val.py</div>
<div class="t tr" style="left:63.3px;top:342.2px">train_val2.py</div>
<div class="t tr" style="left:55.9px;top:354.1px">t.py</div>
<div class="t tr" style="left:55.9px;top:366.0px">t_quant.py</div>
<div class="q" style="left:11.9px;top:376.5px;width:198.7px;height:11.6px;background:#0d293e"></div>
<div class="q" style="left:33.2px;top:374.2px;width:22.7px;height:14.7px;background:#0b2640"></div>
<div class="t tr" style="left:55.9px;top:377.9px">in.py</div>
<div class="t tr" style="left:55.9px;top:389.8px">in_tianshu.py</div>
<div class="t tr" style="left:56px;top:401.7px">orial.ipynb</div>
<div class="t tr" style="left:36.8px;top:413.7px">External Libraries</div>
<div class="t tr" style="left:36.8px;top:425.6px">Scratches and Consoles</div>
<div class="q" style="left:40.6px;top:116.7px;width:7.0px;height:8.2px;background:#484b4d"></div>
<div class="q" style="left:47.6px;top:116.7px;width:7.8px;height:8.2px;background:#959595"></div>
<div class="q" style="left:55.4px;top:116.7px;width:7.8px;height:8.2px;background:#8d8d8d"></div>
<div class="q" style="left:40.6px;top:140.2px;width:7.0px;height:7.6px;background:#45484a"></div>
<div class="q" style="left:47.6px;top:140.2px;width:8.4px;height:7.6px;background:#bdbdbd"></div>
<div class="q" style="left:56.0px;top:140.2px;width:7.2px;height:7.6px;background:#626466"></div>
<div class="q" style="left:40.6px;top:162.2px;width:7.6px;height:7.5px;background:#484b4d"></div>
<div class="q" style="left:48.2px;top:162.2px;width:7.7px;height:7.5px;background:#4d5052"></div>
<div class="q" style="left:40.6px;top:177.5px;width:7.6px;height:7.2px;background:#47494b"></div>
<div class="q" style="left:48.2px;top:177.5px;width:7.7px;height:7.2px;background:#454849"></div>
<div class="q" style="left:48.0px;top:184.8px;width:7.9px;height:7.9px;background:#6a6c6e"></div>
<div class="q" style="left:48.0px;top:200.1px;width:7.9px;height:7.4px;background:#67696b"></div>
<div class="q" style="left:55.9px;top:200.1px;width:7.3px;height:7.4px;background:#a5a5a5"></div>
<div class="q" style="left:55.9px;top:215.4px;width:7.3px;height:14.9px;background:#bcbcbc"></div>
<div class="q" style="left:40.6px;top:222.9px;width:7.4px;height:7.4px;background:#3f5e6e"></div>
<div class="q" style="left:48.0px;top:222.9px;width:7.9px;height:7.4px;background:#8a8a8a"></div>
<div class="q" style="left:40.6px;top:238.0px;width:7.4px;height:7.6px;background:#8a7428"></div>
<div class="q" style="left:55.9px;top:245.9px;width:7.3px;height:7.0px;background:#9c9c9c"></div>
<div class="q" style="left:40.6px;top:260.8px;width:7.4px;height:7.4px;background:#f1c40f"></div>
<div class="q" style="left:48.0px;top:260.8px;width:7.9px;height:7.4px;background:#55585a"></div>
<div class="q" style="left:48.0px;top:283.1px;width:7.9px;height:7.5px;background:#4b4e50"></div>
<div class="q" style="left:55.9px;top:283.1px;width:7.3px;height:7.5px;background:#55585a"></div>
<div class="q" style="left:48.0px;top:305.9px;width:7.9px;height:7.7px;background:#9d9d9d"></div>
<div class="q" style="left:55.9px;top:305.9px;width:7.3px;height:7.7px;background:#8b8b8b"></div>
<div class="q" style="left:48.0px;top:321.2px;width:7.9px;height:7.7px;background:#a8a8a8"></div>
<div class="q" style="left:55.9px;top:321.2px;width:7.3px;height:7.7px;background:#909090"></div>
<div class="q" style="left:40.6px;top:344.0px;width:7.4px;height:7.5px;background:#f1c40f"></div>
<div class="q" style="left:40.6px;top:366.8px;width:7.4px;height:7.4px;background:#7a6a2e"></div>
<div class="q" style="left:48.0px;top:366.8px;width:7.9px;height:7.4px;background:#c8c8c8"></div>
<div class="q" style="left:36.9px;top:404.6px;width:3.2px;height:6.4px;background:#4a8fb0"></div>
<div class="q" style="left:40.0px;top:403.8px;width:8.0px;height:7.8px;background:#3b9cc4"></div>
<div class="q" style="left:48.0px;top:404.0px;width:8.0px;height:7.6px;background:#b5b5b5"></div>
<svg style="left:26px;top:414px" width="8.4" height="6.6" viewBox="0 0 8.4 6.6"><path d="M0.6 0.8V6.4M2.4 0.2V6.4" stroke="#afb1b3" stroke-width="0.9"/><path d="M4.2 0.8V6.4" stroke="#62b543" stroke-width="0.9"/><path d="M6 0.2V6.4" stroke="#3d9fd0" stroke-width="0.9"/><path d="M7.7 1.4V6.4" stroke="#afb1b3" stroke-width="0.9"/></svg>
<svg style="left:26px;top:425.6px" width="9" height="9" viewBox="0 0 9 9"><rect x="0.4" y="0.3" width="5.4" height="5" fill="#9aa7b0"/><path d="M1.2 1.6H5M1.2 3H3.4" stroke="#3c3f41" stroke-width="0.6"/><circle cx="5.9" cy="6" r="2.7" fill="#3d9fd0"/><path d="M5.9 4.6V6.2H7" stroke="#fff" stroke-width="0.5" fill="none"/></svg>
<div class="a" style="left:210.6px;top:461.3px;width:583.4px;height:13.1px;background:#313335"></div>
<div class="a" style="left:210.6px;top:461.1px;width:583.4px;height:0.7px;background:#3d4042"></div>
<div class="a" style="left:210.6px;top:102.4px;width:583.4px;height:358.9px;background:#2b2b2b"></div>
<div class="a" style="left:210.6px;top:102.4px;width:37px;height:358.9px;background:#313335"></div>
<div class="a" style="left:247.1px;top:102.4px;width:0.8px;height:358.9px;background:#555555"></div>
<div class="a" style="left:211px;top:87.5px;width:53px;height:14.9px;background:#4e5254"></div>
<div class="a" style="left:211px;top:100.3px;width:53px;height:2.1px;background:#4a88c7"></div>
<svg style="left:217.2px;top:90.4px" width="7.6" height="8.8" viewBox="0 0 7.6 8.8"><path d="M3.2 0.3C2.1 0.3 1.7 0.8 1.7 1.5V2.4H3.6V2.8H1C0.4 2.8 0.1 3.5 0.1 4.3C0.1 5.2 0.4 5.8 1 5.8H1.7V4.8C1.7 4 2.3 3.6 2.9 3.6H4.5C5 3.6 5.4 3.2 5.4 2.6V1.5C5.4 0.8 4.8 0.3 4.2 0.3Z" fill="#4f9ad0"/><path d="M4.4 8.5C5.5 8.5 5.9 8 5.9 7.3V6.4H4V6H6.6C7.2 6 7.5 5.3 7.5 4.5C7.5 3.6 7.2 3 6.6 3H5.9V4C5.9 4.8 5.3 5.2 4.7 5.2H3.1C2.6 5.2 2.2 5.6 2.2 6.2V7.3C2.2 8 2.8 8.5 3.4 8.5Z" fill="#f0c63a"/><path d="M0.3 1.5H1.7V8.6H0.3Z" fill="#9aa7b0" opacity="0.7"/></svg>
<div class="t" style="left:226.5px;top:90.2px;font-size:7.2px;color:#bbbbbb">train.py</div>
<svg style="left:254.4px;top:91.9px" width="5" height="5" viewBox="0 0 5 5"><path d="M0.5 0.5L4.5 4.5M4.5 0.5L0.5 4.5" stroke="#6e7072" stroke-width="0.7"/></svg>
<svg style="left:786.4px;top:90.6px" width="3" height="8" viewBox="0 0 3 8"><circle cx="1.5" cy="1.2" r="0.75" fill="#afb1b3"/><circle cx="1.5" cy="4" r="0.75" fill="#afb1b3"/><circle cx="1.5" cy="6.8" r="0.75" fill="#afb1b3"/></svg>
<div class="a" style="left:211px;top:277.5px;width:583px;height:12.4px;background:#323232"></div>
<div class="a" style="left:247.1px;top:277.5px;width:0.8px;height:12.4px;background:#555555"></div>
<svg style="left:755.1px;top:106.6px" width="7" height="6.5" viewBox="0 0 6.4 6"><path d="M3.2 0.2L6.2 5.8H0.2Z" fill="#a39467"/><path d="M3.2 2.2V3.8M3.2 4.4V5" stroke="#2b2b2b" stroke-width="0.7"/></svg>
<div class="t" style="left:763.7px;top:105.9px;font-size:6.4px;color:#bbbbbb">2</div>
<svg style="left:772.5px;top:107.8px" width="6" height="4" viewBox="0 0 6 4"><path d="M0.8 3.4L3 1.1L5.2 3.4" stroke="#afb1b3" stroke-width="1.1" fill="none"/></svg>
<svg style="left:784.6px;top:108.2px" width="6" height="4" viewBox="0 0 6 4"><path d="M0.8 0.6L3 2.9L5.2 0.6" stroke="#afb1b3" stroke-width="1.1" fill="none"/></svg>
<div class="q" style="left:789.0px;top:117.8px;width:5.0px;height:19.2px;background:#4f5152"></div>
<div class="q" style="left:786.3px;top:124.0px;width:7.7px;height:2.1px;background:#be7f89"></div>
<div class="q" style="left:786.3px;top:127.0px;width:7.7px;height:2.0px;background:#6b6654"></div>
<div class="q" style="left:786.3px;top:185.0px;width:7.7px;height:2.2px;background:#0a7d0a"></div>
<svg style="left:244.6px;top:105.6px" width="5.6" height="7" viewBox="0 0 5.6 7"><path d="M0.5 0.5H5.1V4.6L2.8 6.5L0.5 4.6Z" fill="#2b2b2b" stroke="#6b6e70" stroke-width="0.7"/><path d="M1.6 3H4" stroke="#6b6e70" stroke-width="0.7"/></svg>
<div class="a" style="left:211px;top:102.4px;width:583px;height:359px;overflow:hidden"><div class="a code" style="left:40.2px;top:1.1px"><b>import</b> argparse
<b>import</b> logging
<b>import</b> math
<b>import</b> os
<b>import</b> random
<b>import</b> time
<b>from</b> pathlib <b>import</b> Path
<b>from</b> threading <b>import</b> Thread
<b>from</b> warnings <b>import</b> warn

<b>import</b> numpy <b>as</b> np
<b>import</b> torch.distributed <b>as</b> dist
<b>import</b> torch.nn <b>as</b> nn
<b>import</b> torch.nn.functional <b>as</b> <u>F</u>
<b>import</b> torch.optim <b>as</b> optim
<b>import</b> torch.optim.lr_scheduler <b>as</b> lr_scheduler
<b>import</b> torch.utils.data
<b>import</b> yaml
<b>from</b> torch.cuda <b>import</b> amp
<b>from</b> torch.nn.parallel <b>import</b> DistributedDataParallel <b>as</b> <u>DDP</u>
<b>from</b> torch.utils.tensorboard <b>import</b> SummaryWriter
<b>from</b> tqdm <b>import</b> tqdm

<b>import</b> test  <i># import test.py to get mAP after each epoch</i>
<b>from</b> models.experimental <b>import</b> attempt_load
<b>from</b> models.yolo <b>import</b> Model
<b>from</b> utils.autoanchor <b>import</b> check_anchors
<b>from</b> utils.datasets <b>import</b> create_dataloader
<b>from</b> utils.general <b>import</b> labels_to_class_weights<b>,</b> increment_path<b>,</b></div>
<div class="a ln" style="left:-6px;top:1.3px">1
2
3
4
5
6
7
8
9
10
11
12
13
14
<span style="color:#a4a3a3">15</span>
16
17
18
19
20
21
22
23
24
25
26
27
28
29</div></div>
<div class="a" style="left:251.4px;top:456.1px;width:517px;height:5.2px;background:rgba(128,128,128,0.28)"></div>
<div class="a" style="left:374.2px;top:279px;width:0.8px;height:9.6px;background:#bbbbbb"></div>
<div class="a" style="left:0;top:474.4px;width:794px;height:0.7px;background:#323232"></div>
<div class="a" style="left:0;top:487.3px;width:794px;height:0.6px;background:#383b3d"></div>
<svg style="left:16.6px;top:478px" width="5" height="7.6" viewBox="0 0 5 7.6"><path d="M1.2 0.4V7.2M1.2 5.4C3.8 5.4 3.8 4.4 3.8 2.6" stroke="#b8babc" stroke-width="1.2" fill="none"/><circle cx="3.8" cy="1.8" r="1.1" fill="#b8babc"/></svg>
<div class="t tw" style="left:26.6px">Git</div>
<svg style="left:46.4px;top:478.8px" width="6.4" height="6" viewBox="0 0 6.4 6"><path d="M0.2 0.8H1.2M2 0.8H6.2M0.2 3.1H1.2M2 3.1H6.2M0.2 5.4H1.2M2 5.4H6.2" stroke="#afb1b3" stroke-width="1"/></svg>
<div class="t tw" style="left:55px">TODO</div>
<svg style="left:85.3px;top:478.6px" width="6.4" height="6.4" viewBox="0 0 6.4 6.4"><circle cx="3.2" cy="3.2" r="3" fill="#afb1b3"/><path d="M3.2 1.4V3.7M3.2 4.4V5.1" stroke="#3c3f41" stroke-width="0.8"/></svg>
<div class="t tw" style="left:94.3px">Problems</div>
<svg style="left:134.8px;top:478.6px" width="6.8" height="6.4" viewBox="0 0 6.8 6.4"><rect x="0.2" y="0.3" width="6.4" height="5.8" rx="0.6" fill="#afb1b3"/><path d="M1.4 1.8L2.8 3L1.4 4.2M3.4 4.4H5.2" stroke="#3c3f41" stroke-width="0.7" fill="none"/></svg>
<div class="t tw" style="left:144.3px">Terminal</div>
<svg style="left:183.6px;top:478.2px" width="7.6" height="7.2" viewBox="0 0 7.6 7.2"><path d="M3.8 0.2L7.4 1.9L3.8 3.6L0.2 1.9Z" fill="#afb1b3"/><path d="M0.4 3.6L3.8 5.2L7.2 3.6M0.4 5.2L3.8 6.8L7.2 5.2" stroke="#afb1b3" stroke-width="0.8" fill="none"/></svg>
<div class="t tw" style="left:193.3px">Python Packages</div>
<svg style="left:258px;top:478.2px" width="7" height="7" viewBox="0 0 7 7"><path d="M2.2 0.2H4.8V2.2H6.8V4.8H4.8V6.8H2.2V4.8H0.2V2.2H2.2Z" fill="#afb1b3"/><circle cx="3.5" cy="3.5" r="0.8" fill="#3c3f41"/></svg>
<div class="t tw" style="left:267.6px">Python Console</div>
<div class="a" style="left:736.2px;top:478.1px;width:7.2px;height:7.2px;border-radius:50%;background:#e05555"></div>
<div class="t" style="left:738.3px;top:477.8px;font-size:5.6px;color:#fff;line-height:8px;font-weight:bold">1</div>
<div class="t tw" style="left:746px">Event Log</div>
<svg style="left:2.4px;top:490.6px" width="6.4" height="6.4" viewBox="0 0 6.4 6.4"><rect x="0.4" y="1.6" width="4.4" height="4.4" stroke="#afb1b3" stroke-width="0.7" fill="none"/><path d="M1.8 0.4H6V4.8" stroke="#afb1b3" stroke-width="0.7" fill="none"/></svg>
<div class="t sb" style="left:14.3px">Cannot Run Git: Git is not installed // Configure...</div>
<div class="t sb" style="left:583.5px">15:28</div>
<div class="t sb" style="left:608px">LF</div>
<div class="t sb" style="left:621.4px">UTF-8</div>
<div class="t sb" style="left:647px">4 spaces</div>
<div class="t sb" style="left:681.8px">&lt;No interpreter&gt;</div>
<svg style="left:742.6px;top:490px" width="5" height="7.6" viewBox="0 0 5 7.6"><path d="M1.2 0.4V7.2M1.2 5.4C3.8 5.4 3.8 4.4 3.8 2.6" stroke="#b8babc" stroke-width="1.2" fill="none"/><circle cx="3.8" cy="1.8" r="1.1" fill="#b8babc"/></svg>
<div class="t sb" style="left:751.8px">master</div>
<svg style="left:779.7px;top:489.8px" width="7" height="7.4" viewBox="0 0 7 7.4"><rect x="1.8" y="3.4" width="4.8" height="3.6" fill="#afb1b3"/><path d="M1 3.6V2A1.4 1.4 0 0 1 3.8 2V3.4" stroke="#afb1b3" stroke-width="0.8" fill="none"/></svg>
<div class="a" style="left:552.9px;top:426.8px;width:237.3px;height:41.8px;background:rgba(79,82,84,0.95);border:0.5px solid #5c5f61"></div>
<div class="a" style="left:559.6px;top:431.3px;width:8.2px;height:8.2px;border-radius:50%;background:#db5050"></div>
<div class="a" style="left:563.1px;top:432.9px;width:1.2px;height:3.2px;background:#f3dada"></div><div class="a" style="left:563.1px;top:436.9px;width:1.2px;height:1.1px;background:#f3dada"></div>
<div class="t" style="left:571.8px;top:431.2px;font-size:7.1px;color:#e2e2e2;font-weight:bold">Cannot Run Git</div>
<div class="t" style="left:571.5px;top:442.8px;font-size:7.1px;color:#bbbbbb">Git is not installed</div>
<div class="t" style="left:571.5px;top:456.3px;font-size:7.1px;color:#589df6">Configure...</div>
<div class="a" style="left:0;top:521.6px;width:816px;height:3.4px;background:#1b2b33"></div>
<div class="a" style="left:112px;top:521.6px;width:28px;height:3.4px;background:#4a555c"></div>
<div class="a" style="left:814px;top:521.6px;width:0.8px;height:3.4px;background:#8a9398"></div>
</body></html>
